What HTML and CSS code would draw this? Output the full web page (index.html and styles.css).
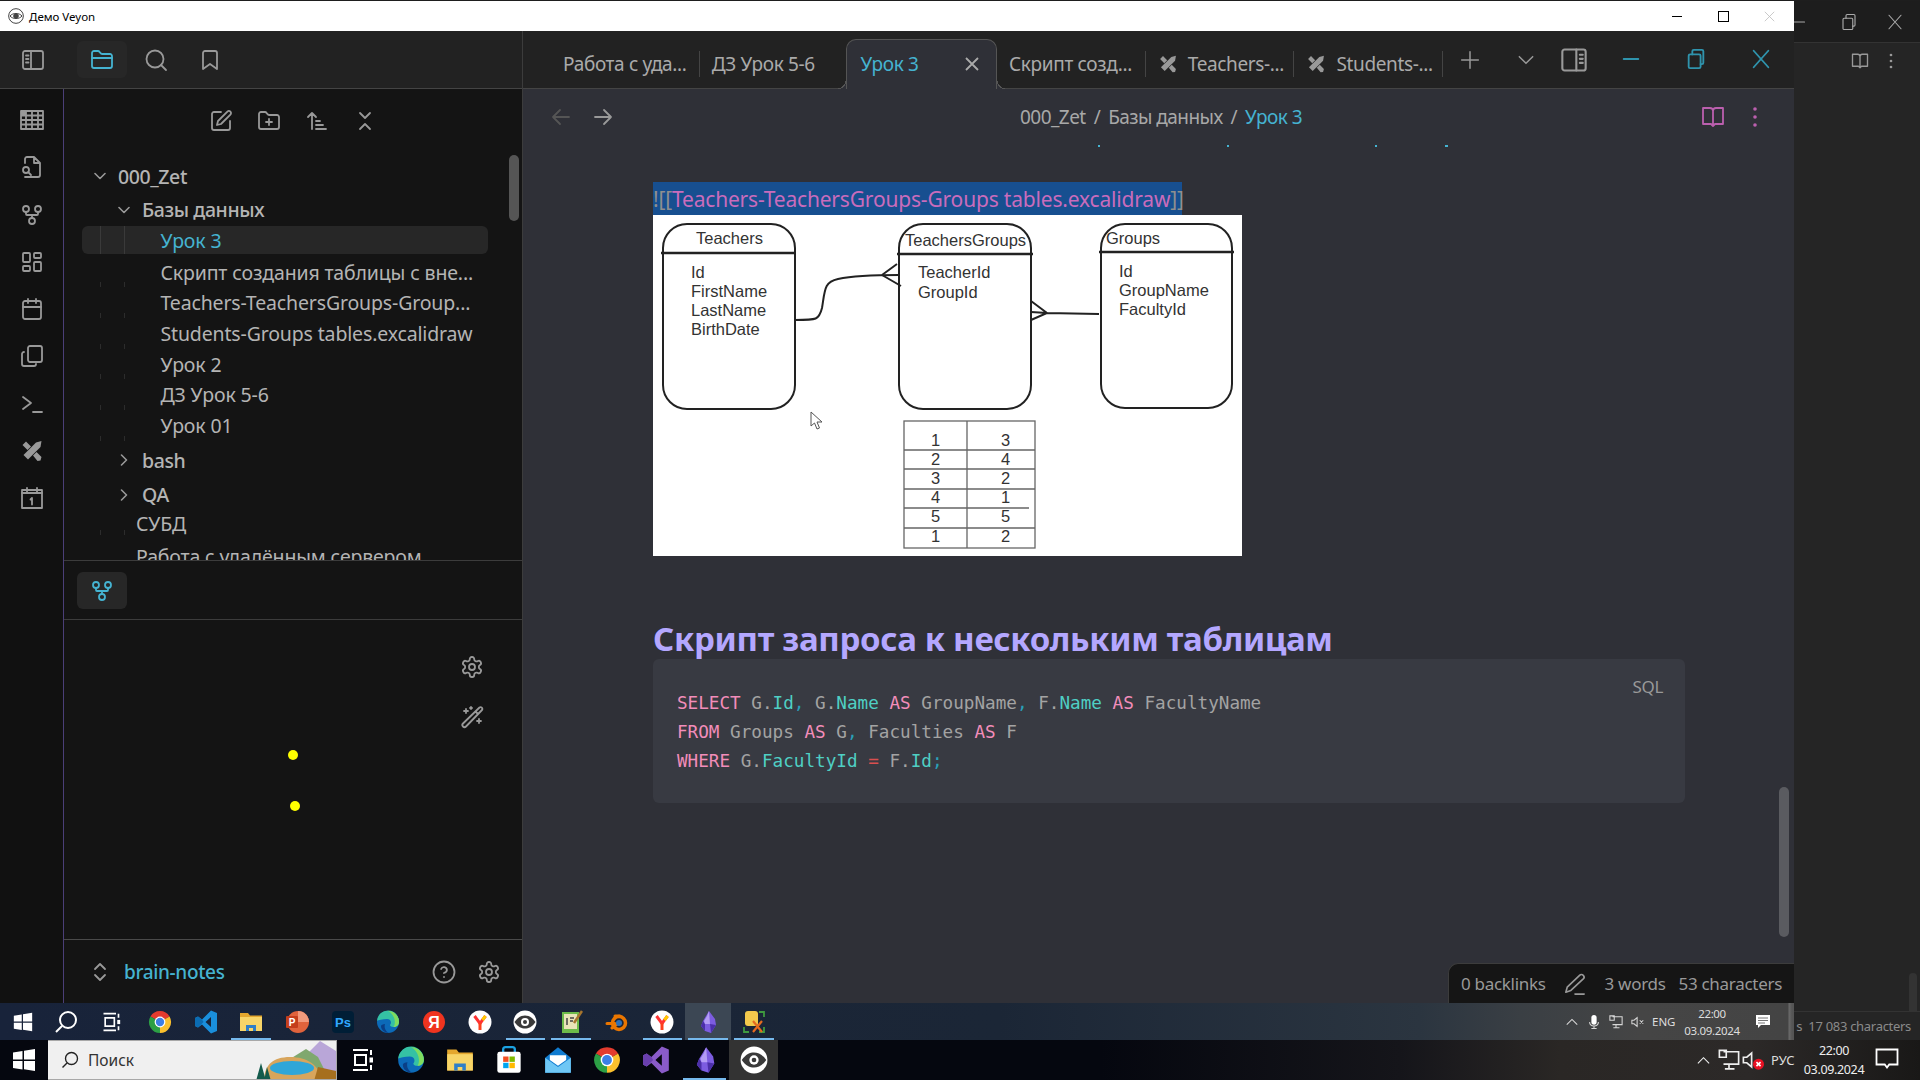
FILE: index.html
```html
<!DOCTYPE html>
<html lang="ru">
<head>
    <meta charset="UTF-8">
    <title>Демо Veyon</title>
    <link rel="stylesheet" href="styles.css">
</head>
<body>

<!-- Icon set -->
<svg class="defs" width="0" height="0">
    <defs>
        <symbol id="i-sidebar" viewBox="0 0 24 24"><rect x="2" y="3" width="20" height="18" rx="2"/><path d="M10 3v18M5 7.500h2.500M5 11h2.500M5 14.500h2.500"/></symbol>
        <symbol id="i-rightbar" viewBox="0 0 24 24"><rect x="2" y="3" width="20" height="18" rx="2"/><path d="M14 3v18M17 7.500h2.500M17 11h2.500M17 14.500h2.500"/></symbol>
        <symbol id="i-folder" viewBox="0 0 24 24"><path d="M4 20h16a2 2 0 0 0 2-2V8a2 2 0 0 0-2-2h-7.930a2 2 0 0 1-1.660-.9l-.82-1.200A2 2 0 0 0 7.930 3H4a2 2 0 0 0-2 2v13c0 1.100.9 2 2 2Z"/><path d="M2 10h20"/></symbol>
        <symbol id="i-search" viewBox="0 0 24 24"><circle cx="11" cy="11" r="8.500"/><path d="m22 22-5-5"/></symbol>
        <symbol id="i-bookmark" viewBox="0 0 24 24"><path d="M19 21l-7-5-7 5V5a2 2 0 0 1 2-2h10a2 2 0 0 1 2 2z"/></symbol>
        <symbol id="i-edit" viewBox="0 0 24 24"><path d="M12 3H5a2 2 0 0 0-2 2v14a2 2 0 0 0 2 2h14a2 2 0 0 0 2-2v-7"/><path d="M18.400 2.600a2.100 2.100 0 1 1 3 3L12 15l-4 1 1-4Z"/></symbol>
        <symbol id="i-folder-plus" viewBox="0 0 24 24"><path d="M4 20h16a2 2 0 0 0 2-2V8a2 2 0 0 0-2-2h-7.930a2 2 0 0 1-1.660-.9l-.82-1.200A2 2 0 0 0 7.930 3H4a2 2 0 0 0-2 2v13c0 1.100.9 2 2 2Z"/><path d="M12 10v6M9 13h6"/></symbol>
        <symbol id="i-sort" viewBox="0 0 24 24"><path d="m3 8 4-4 4 4M7 4v16M11 12h4M11 16h7M11 20h10"/></symbol>
        <symbol id="i-collapse" viewBox="0 0 24 24"><path d="m7 20 5-5 5 5M7 4l5 5 5-5"/></symbol>
        <symbol id="i-graph" viewBox="0 0 24 24"><circle cx="12" cy="18" r="3"/><circle cx="6" cy="6" r="3"/><circle cx="18" cy="6" r="3"/><path d="M18 9v2c0 .6-.4 1-1 1H7c-.6 0-1-.4-1-1V9M12 12v3"/></symbol>
        <symbol id="i-table" viewBox="0 0 24 24"><path d="M1 3h22v18H1zM1 7.500h22M1 12h22M1 16.500h22M6 3v18M12 3v18M18 3v18"/><rect class="solid" x="1" y="3" width="5" height="4.500"/></symbol>
        <symbol id="i-file-search" viewBox="0 0 24 24"><path d="M14 2v6h6M14 2H7a2 2 0 0 0-2 2v4M14 2l6 6v12a2 2 0 0 1-2 2H5"/><circle cx="6" cy="15" r="3"/><path d="m11 20-2.800-2.800"/></symbol>
        <symbol id="i-dash" viewBox="0 0 24 24"><rect x="3" y="3" width="7" height="9" rx="1"/><rect x="14" y="3" width="7" height="5" rx="1"/><rect x="14" y="12" width="7" height="9" rx="1"/><rect x="3" y="16" width="7" height="5" rx="1"/></symbol>
        <symbol id="i-calendar" viewBox="0 0 24 24"><rect x="3" y="4" width="18" height="18" rx="2"/><path d="M16 2v4M8 2v4M3 10h18"/></symbol>
        <symbol id="i-copy" viewBox="0 0 24 24"><rect x="8" y="2" width="14" height="16" rx="2"/><path d="M4 8H4a2 2 0 0 0-2 2v10a2 2 0 0 0 2 2h10a2 2 0 0 0 2-2"/></symbol>
        <symbol id="i-terminal" viewBox="0 0 24 24"><path d="m3 5 8 6-8 6M13 20h9"/></symbol>
        <symbol id="i-tools" viewBox="0 0 24 24"><path class="solid" d="M21.500 2 16 3.500 3.500 16l4.500 4.500L20.500 8Z"/><path class="solid" d="M2.500 6 6 2.500l5 5L7.500 11ZM13 16.500l3.500-3.500 5 5-1 3.500-3 .5Z"/></symbol>
        <symbol id="i-daily" viewBox="0 0 24 24"><rect x="2" y="4" width="20" height="18"/><path d="M7 2v4M17 2v4M2 7h20M12 12v6.500M10.500 13.500 12 12"/></symbol>
        <symbol id="i-gear" viewBox="0 0 24 24"><path d="M12.220 2h-.44a2 2 0 0 0-2 2v.18a2 2 0 0 1-1 1.730l-.43.25a2 2 0 0 1-2 0l-.15-.08a2 2 0 0 0-2.730.73l-.22.38a2 2 0 0 0 .73 2.730l.15.1a2 2 0 0 1 1 1.720v.51a2 2 0 0 1-1 1.740l-.15.09a2 2 0 0 0-.73 2.730l.22.38a2 2 0 0 0 2.730.73l.15-.08a2 2 0 0 1 2 0l.43.25a2 2 0 0 1 1 1.730V20a2 2 0 0 0 2 2h.44a2 2 0 0 0 2-2v-.18a2 2 0 0 1 1-1.730l.43-.25a2 2 0 0 1 2 0l.15.08a2 2 0 0 0 2.730-.73l.22-.39a2 2 0 0 0-.73-2.730l-.15-.08a2 2 0 0 1-1-1.740v-.5a2 2 0 0 1 1-1.740l.15-.09a2 2 0 0 0 .73-2.730l-.22-.38a2 2 0 0 0-2.730-.73l-.15.08a2 2 0 0 1-2 0l-.43-.25a2 2 0 0 1-1-1.730V4a2 2 0 0 0-2-2z"/><circle cx="12" cy="12" r="3"/></symbol>
        <symbol id="i-wand" viewBox="0 0 24 24"><path d="M19.500 2.500a1.800 1.800 0 0 1 2.500 2.500L6 21.500a1.800 1.800 0 0 1-3-3ZM15.500 6.500l2.500 2.500M6 4v4M4 6h4M19 14v4M17 16h4M11 2v2M10 3h2"/></symbol>
        <symbol id="i-help" viewBox="0 0 24 24"><circle cx="12" cy="12" r="10.500"/><path d="M9.100 9a3 3 0 0 1 5.800 1c0 2-3 3-3 3M12 17h.01"/></symbol>
        <symbol id="i-updown" viewBox="0 0 24 24"><path d="m7 15 5 5 5-5M7 9l5-5 5 5"/></symbol>
        <symbol id="i-book" viewBox="0 0 24 24"><path d="M2 3h7a3 3 0 0 1 3 3v15M22 3h-7a3 3 0 0 0-3 3M2 3v16h8l2 2 2-2h8V3"/></symbol>
        <symbol id="i-dots" viewBox="0 0 24 24"><circle class="solid" cx="12" cy="4" r="1.800"/><circle class="solid" cx="12" cy="12" r="1.800"/><circle class="solid" cx="12" cy="20" r="1.800"/></symbol>
        <symbol id="i-pencil" viewBox="0 0 24 24"><path d="M17 2.500a2.800 2.800 0 1 1 4 4L7.500 19 2 21l1.500-5.500ZM12 23h10"/></symbol>
        <symbol id="i-restore" viewBox="0 0 24 24"><rect x="4" y="7" width="13" height="15" rx="1.500"/><path d="M8 7V3.500A1.500 1.500 0 0 1 9.500 2h9A1.500 1.500 0 0 1 20 3.500V16a1.500 1.500 0 0 1-1.500 1.500H17"/></symbol>

        <!-- Taskbar apps -->
        <symbol id="a-win" viewBox="0 0 24 24"><path class="white" d="M1 4.500 10.500 3v8.500H1ZM12 2.800 23 1v10.500H12ZM1 13h9.500v8.500L1 20ZM12 13h11v10l-11-1.800Z"/></symbol>
        <symbol id="a-search" viewBox="0 0 24 24"><circle class="w-line" cx="14" cy="10" r="8"/><path class="w-line" d="M8 16 2 22"/></symbol>
        <symbol id="a-view" viewBox="0 0 24 24"><path class="w-line" d="M3 2h15M3 22h15M5 7h11v10H5ZM21 2v5M21 17v5"/><rect class="white" x="19.500" y="9.500" width="3.500" height="5"/></symbol>
        <symbol id="a-chrome" viewBox="0 0 24 24"><path fill="#e33b2e" d="M12 12 2.470 6.500A11 11 0 0 1 21.530 6.500Z"/><path fill="#fbc02d" d="M12 12 21.530 6.500A11 11 0 0 1 12 23Z"/><path fill="#2c9f45" d="M12 12 12 23A11 11 0 0 1 2.470 6.500Z"/><circle class="white" cx="12" cy="12" r="5.400"/><circle fill="#3d7fe6" cx="12" cy="12" r="4.200"/></symbol>
        <symbol id="a-vscode" viewBox="0 0 24 24"><path fill="#1a8fdc" d="M17 .5 23 3v18l-6 2.500L8 14.500l-4 3-3-1.500V8l3-1.500 4 3Zm0 6.500-5.500 5 5.500 5Z"/><path fill="#0b6cb3" d="M1 8l3-1.500 4 3 1.500 2.500L4 17.500 1 16Z"/></symbol>
        <symbol id="a-explorer" viewBox="0 0 24 24"><path fill="#e4a72e" d="M1 3h8l2 2.500h12V21H1Z"/><path fill="#f8d568" d="M1 7h22v14H1Z"/><path fill="#2f7fc8" d="M7 21v-6h10v6h-3v-3h-4v3Z"/></symbol>
        <symbol id="a-ppt" viewBox="0 0 24 24"><circle fill="#e0633c" cx="13" cy="12" r="11"/><path fill="#f19a7c" d="M13 1a11 11 0 0 1 11 11H13Z"/><rect fill="#c43e1c" x="1" y="6" width="12" height="12" rx="1"/><text class="app-letter" x="7" y="15.500" font-size="10" fill="#fff">P</text></symbol>
        <symbol id="a-ps" viewBox="0 0 24 24"><rect fill="#001e36" x="1" y="1" width="22" height="22" rx="4"/><text class="app-letter" x="12" y="17" font-size="13" fill="#31a8ff">Ps</text></symbol>
        <symbol id="a-edge" viewBox="0 0 24 24"><circle fill="#0c6ab8" cx="12" cy="12" r="11"/><path fill="#35c1a4" d="M1 11A11 11 0 0 1 23 12c0 3-2.500 5-5.500 5-2 0-3.500-.8-3.500-2 2-2 1-6-3-6-4.500 0-8.500 1-10.500 2Z"/><path fill="#7fdc5e" d="M12 1a11 11 0 0 1 11 11c0 3-2.500 5-5.500 5 3-4 1-13-5.500-16Z"/><path fill="#0a3f86" d="M5 16c0 4 4 7 8 7-4-2-5-6-4-9-2 0-4 1-4 2Z"/></symbol>
        <symbol id="a-ya" viewBox="0 0 24 24"><circle fill="#f0341f" cx="12" cy="12" r="11"/><text class="app-letter" x="12" y="18" font-size="16" fill="#fff">Я</text></symbol>
        <symbol id="a-yb" viewBox="0 0 24 24"><circle class="white" cx="12" cy="12" r="11.500"/><path fill="none" stroke="#f33" stroke-width="3" d="M6.500 6 12 13.500 17.500 6"/><path fill="none" stroke="#fc3f1d" stroke-width="3" d="M12 13v7"/><path fill="none" stroke="#fc0" stroke-width="3" d="M14.500 10 17.500 6"/></symbol>
        <symbol id="a-veyon" viewBox="0 0 24 24"><circle class="white" cx="12" cy="12" r="11.500"/><path fill="#3a3a3a" d="M1.500 12C5 7 8.500 5.500 12 5.500S19 7 22.500 12C19 17 15.500 18.500 12 18.500S5 17 1.500 12Z"/><circle class="white" cx="12" cy="12" r="4"/><circle fill="#3a3a3a" cx="12" cy="12" r="2"/></symbol>
        <symbol id="a-notepad" viewBox="0 0 24 24"><rect fill="#6dbb4a" x="3" y="2" width="17" height="21"/><rect fill="#e8e4b8" x="5" y="4" width="13" height="15"/><path stroke="#444" stroke-width="1.500" d="M8 8v7M11 8h4M11 11h3"/><path stroke="#a7752d" stroke-width="2.500" d="M15 13 23 1"/></symbol>
        <symbol id="a-blender" viewBox="0 0 24 24"><circle fill="none" stroke="#ea7600" stroke-width="3.500" cx="14" cy="13" r="6.500"/><path stroke="#ea7600" stroke-width="3" stroke-linecap="round" d="M2 13.500h8M7 18l5-4M10 6h5"/><circle fill="#2d6fb5" cx="14" cy="13" r="3"/></symbol>
        <symbol id="a-obsidian" viewBox="0 0 24 24"><path fill="#7c5ce0" d="M13 1 19 9l1 6-5 8-6-2-4-5 2-5 3-5Z"/><path fill="#4b2fa8" d="M9 21l-4-5 2-5 2 3ZM15 23l-1-9 6 1Z"/><path fill="#b39cf5" d="M13 1 14 14l-5 0-1-3 3-5Z"/></symbol>
        <symbol id="a-app" viewBox="0 0 24 24"><path fill="none" stroke="#3f9a3f" stroke-width="1.800" d="M17 2h5v5M2 17v5h5M22 17v5h-5"/><rect fill="#f2c94c" x="3" y="1" width="13" height="15" rx="3"/><path fill="none" stroke="#e56b1f" stroke-width="2.200" d="M11 11l9 11M20 11l-9 11"/></symbol>
        <symbol id="a-store" viewBox="0 0 24 24"><path fill="none" stroke="#1ba1e2" stroke-width="2" d="M7 7V3a2 2 0 0 1 2-2h6a2 2 0 0 1 2 2v4"/><rect class="white" x="2" y="5" width="20" height="18" rx="2"/><rect fill="#f25022" x="7" y="9" width="4.600" height="4.600"/><rect fill="#7fba00" x="12.400" y="9" width="4.600" height="4.600"/><rect fill="#00a4ef" x="7" y="14.400" width="4.600" height="4.600"/><rect fill="#ffb900" x="12.400" y="14.400" width="4.600" height="4.600"/></symbol>
        <symbol id="a-mail" viewBox="0 0 24 24"><path fill="#0f7bd0" d="M12 1 23 10v13H1V10Z"/><path fill="#6fc7f5" d="M1 10v13h22V10L12 18Z"/><path fill="#fff" d="M5 8h14v4l-7 5-7-5Z"/></symbol>
        <symbol id="a-vs" viewBox="0 0 24 24"><path fill="#8a5bc9" d="M17 .5 23 3v18l-6 2.500L8 14.500l-4 3-3-1.500V8l3-1.500 4 3Zm0 6.500-5.500 5 5.500 5Z"/><path fill="#6a3fae" d="M1 8l3-1.500 4 3 1.500 2.500L4 17.500 1 16Z"/></symbol>
    </defs>
</svg>

<div class="desktop">
    <div class="windows">

        <!-- Veyon demo window -->
        <div class="veyon">
            <div class="titlebar">
                <svg class="title-eye" viewBox="0 0 24 24"><circle cx="12" cy="12" r="11"/><path d="M3 12c4-5 14-5 18 0-4 5-14 5-18 0Z"/><circle class="eye-dot" cx="12" cy="12" r="3.500"/></svg>
                <span class="title-text">Демо Veyon</span>
                <div class="title-buttons">
                    <span class="tb-min"></span>
                    <span class="tb-max"></span>
                    <svg class="tb-close" viewBox="0 0 14 14"><path d="M1 1l12 12M13 1 1 13"/></svg>
                </div>
            </div>

            <div class="app">
                <!-- Left part -->
                <div class="left">
                    <div class="left-head">
                        <span class="head-btn first"><svg class="ic"><use href="#i-sidebar"/></svg></span>
                        <span class="head-btn active"><svg class="ic"><use href="#i-folder"/></svg></span>
                        <span class="head-btn"><svg class="ic"><use href="#i-search"/></svg></span>
                        <span class="head-btn"><svg class="ic"><use href="#i-bookmark"/></svg></span>
                    </div>
                    <div class="left-body">
                        <div class="ribbon">
                            <svg class="ic"><use href="#i-table"/></svg>
                            <svg class="ic"><use href="#i-file-search"/></svg>
                            <svg class="ic"><use href="#i-graph"/></svg>
                            <svg class="ic"><use href="#i-dash"/></svg>
                            <svg class="ic"><use href="#i-calendar"/></svg>
                            <svg class="ic"><use href="#i-copy"/></svg>
                            <svg class="ic"><use href="#i-terminal"/></svg>
                            <svg class="ic"><use href="#i-tools"/></svg>
                            <svg class="ic"><use href="#i-daily"/></svg>
                        </div>
                        <div class="sidebar">
                            <div class="files-pane">
                                <div class="nav-buttons">
                                    <svg class="ic"><use href="#i-edit"/></svg>
                                    <svg class="ic"><use href="#i-folder-plus"/></svg>
                                    <svg class="ic"><use href="#i-sort"/></svg>
                                    <svg class="ic"><use href="#i-collapse"/></svg>
                                </div>
                                <div class="tree">
                                    <div class="tree-folder lvl0"><svg class="chev" viewBox="0 0 12 12"><path d="M1 3.500 6 8.500l5-5"/></svg>000_Zet</div>
                                    <div class="tree-folder lvl1 open"><svg class="chev" viewBox="0 0 12 12"><path d="M1 3.500 6 8.500l5-5"/></svg>Базы данных</div>
                                    <div class="tree-file current">Урок 3</div>
                                    <div class="tree-file">Скрипт создания таблицы с вне...</div>
                                    <div class="tree-file">Teachers-TeachersGroups-Group...</div>
                                    <div class="tree-file">Students-Groups tables.excalidraw</div>
                                    <div class="tree-file">Урок 2</div>
                                    <div class="tree-file">ДЗ Урок 5-6</div>
                                    <div class="tree-file">Урок 01</div>
                                    <div class="tree-folder lvl1 after-files"><svg class="chev" viewBox="0 0 12 12"><path d="M3.500 1 8.500 6l-5 5"/></svg>bash</div>
                                    <div class="tree-folder lvl1"><svg class="chev" viewBox="0 0 12 12"><path d="M3.500 1 8.500 6l-5 5"/></svg>QA</div>
                                    <div class="tree-file top subd">СУБД</div>
                                    <div class="tree-file top">Работа с удалённым сервером</div>
                                </div>
                                <div class="tree-scroll"></div>
                            </div>
                            <div class="graph-head">
                                <span class="head-btn active"><svg class="ic"><use href="#i-graph"/></svg></span>
                            </div>
                            <div class="graph-pane">
                                <svg class="ic graph-gear"><use href="#i-gear"/></svg>
                                <svg class="ic graph-wand"><use href="#i-wand"/></svg>
                                <span class="graph-node n1"></span>
                                <span class="graph-node n2"></span>
                            </div>
                            <div class="vault-bar">
                                <svg class="ic updown"><use href="#i-updown"/></svg>
                                <span class="vault-name">brain-notes</span>
                                <svg class="ic help"><use href="#i-help"/></svg>
                                <svg class="ic"><use href="#i-gear"/></svg>
                            </div>
                        </div>
                    </div>
                </div>

                <!-- Main part -->
                <div class="main">
                    <div class="tabbar">
                        <div class="tab sep">Работа с уда...</div>
                        <div class="tab">ДЗ Урок 5-6</div>
                        <div class="tab active">Урок 3<svg class="tab-close" viewBox="0 0 14 14"><path d="M1 1l12 12M13 1 1 13"/></svg></div>
                        <div class="tab sep">Скрипт созд...</div>
                        <div class="tab sep"><svg class="ic tab-ic"><use href="#i-tools"/></svg>Teachers-...</div>
                        <div class="tab sep"><svg class="ic tab-ic"><use href="#i-tools"/></svg>Students-...</div>
                        <svg class="ic tab-plus" viewBox="0 0 24 24"><path d="M12 2v20M2 12h20"/></svg>
                        <svg class="ic tab-list" viewBox="0 0 24 24"><path d="m4 8 8 8 8-8"/></svg>
                        <svg class="ic tab-panel"><use href="#i-rightbar"/></svg>
                        <div class="win-buttons">
                            <svg class="ic" viewBox="0 0 24 24"><path d="M4 12h16"/></svg>
                            <svg class="ic"><use href="#i-restore"/></svg>
                            <svg class="ic" viewBox="0 0 24 24"><path d="M4 3l16 18M20 3 4 21"/></svg>
                        </div>
                    </div>

                    <div class="view">
                        <div class="view-head">
                            <svg class="ic back" viewBox="0 0 24 24"><path d="M20 12H4m7-7-7 7 7 7"/></svg>
                            <svg class="ic forward" viewBox="0 0 24 24"><path d="M4 12h16m-7-7 7 7-7 7"/></svg>
                            <div class="crumbs"><span>000_Zet</span><i>/</i><span>Базы данных</span><i>/</i><span class="crumb-now">Урок 3</span></div>
                            <svg class="ic mode"><use href="#i-book"/></svg>
                            <svg class="ic more"><use href="#i-dots"/></svg>
                        </div>
                        <svg class="cut-line" viewBox="0 0 1271 3"><rect x="575" width="2" height="2"/><rect x="704" width="2" height="2"/><rect x="852" width="2" height="2"/><rect x="922" width="3" height="2"/></svg>

                        <div class="note">
                            <div class="embed-link"><span class="brk">![[</span>Teachers-TeachersGroups-Groups tables.excalidraw<span class="brk">]]</span></div>
                            <div class="drawing">
                                <svg class="er" viewBox="0 0 589 341">
                                    <g class="er-line">
                                        <rect x="10" y="9" width="132" height="185" rx="24"/>
                                        <path class="er-head" d="M8 38h135"/>
                                        <rect x="246" y="9" width="132" height="185" rx="24"/>
                                        <path class="er-head" d="M244 39h136"/>
                                        <rect x="448" y="9" width="131" height="184" rx="24"/>
                                        <path class="er-head" d="M446 37h135"/>
                                        <path d="M142 105c22 0 24 0 27-12 3-18 2-26 16-29 14-3 40-4 61-4"/>
                                        <path d="M229 60 244 49M229 60 248 71M378 86 394 98 378 105M378 97 394 98 446 99"/>
                                    </g>
                                    <g class="er-grid">
                                        <rect x="251" y="206" width="131" height="127"/>
                                        <path d="M314 206v127M251 235h131M251 254h131M251 274h131M251 293h125M251 313h131"/>
                                    </g>
                                    <g class="er-text">
                                        <text x="43" y="29">Teachers</text>
                                        <text x="38" y="63">Id</text>
                                        <text x="38" y="82">FirstName</text>
                                        <text x="38" y="101">LastName</text>
                                        <text x="38" y="120">BirthDate</text>
                                        <text x="252" y="31">TeachersGroups</text>
                                        <text x="265" y="63">TeacherId</text>
                                        <text x="265" y="83">GroupId</text>
                                        <text x="453" y="29">Groups</text>
                                        <text x="466" y="62">Id</text>
                                        <text x="466" y="81">GroupName</text>
                                        <text x="466" y="100">FacultyId</text>
                                        <text x="278" y="231">1</text><text x="348" y="231">3</text>
                                        <text x="278" y="250">2</text><text x="348" y="250">4</text>
                                        <text x="278" y="269">3</text><text x="348" y="269">2</text>
                                        <text x="278" y="288">4</text><text x="348" y="288">1</text>
                                        <text x="278" y="307">5</text><text x="348" y="307">5</text>
                                        <text x="278" y="327">1</text><text x="348" y="327">2</text>
                                    </g>
                                    <path class="er-cursor" d="M158 197v14l3.500-3 2.500 6 2.500-1-2.500-6h5Z"/>
                                </svg>
                            </div>

                            <h2 class="note-title">Скрипт запроса к нескольким таблицам</h2>
                            <div class="code-block">
                                <span class="code-lang">SQL</span>
                                <pre class="code"><b>SELECT</b> G.<em>Id</em><u>,</u> G.<em>Name</em> <b>AS</b> GroupName<u>,</u> F.<em>Name</em> <b>AS</b> FacultyName
<b>FROM</b> Groups <b>AS</b> G<u>,</u> Faculties <b>AS</b> F
<b>WHERE</b> G.<em>FacultyId</em> <s>=</s> F.<em>Id</em><u>;</u></pre>
                            </div>
                        </div>

                        <div class="view-scroll"></div>
                        <div class="status-bar">
                            <span>0 backlinks</span>
                            <svg class="ic pen"><use href="#i-pencil"/></svg>
                            <span class="words">3 words</span>
                            <span>53 characters</span>
                        </div>
                    </div>
                </div>
            </div>

            <!-- Remote taskbar -->
            <div class="taskbar inner">
                <span class="cell"><svg class="app-ic small"><use href="#a-win"/></svg></span>
                <span class="cell"><svg class="app-ic pull"><use href="#a-search"/></svg></span>
                <span class="cell"><svg class="app-ic small pull"><use href="#a-view"/></svg></span>
                <span class="cell"><svg class="app-ic"><use href="#a-chrome"/></svg></span>
                <span class="cell"><svg class="app-ic"><use href="#a-vscode"/></svg></span>
                <span class="cell open"><svg class="app-ic"><use href="#a-explorer"/></svg></span>
                <span class="cell"><svg class="app-ic"><use href="#a-ppt"/></svg></span>
                <span class="cell"><svg class="app-ic"><use href="#a-ps"/></svg></span>
                <span class="cell"><svg class="app-ic"><use href="#a-edge"/></svg></span>
                <span class="cell"><svg class="app-ic"><use href="#a-ya"/></svg></span>
                <span class="cell"><svg class="app-ic"><use href="#a-yb"/></svg></span>
                <span class="cell open"><svg class="app-ic"><use href="#a-veyon"/></svg></span>
                <span class="cell open"><svg class="app-ic"><use href="#a-notepad"/></svg></span>
                <span class="cell"><svg class="app-ic"><use href="#a-blender"/></svg></span>
                <span class="cell open"><svg class="app-ic"><use href="#a-yb"/></svg></span>
                <span class="cell open current"><svg class="app-ic"><use href="#a-obsidian"/></svg></span>
                <span class="cell open"><svg class="app-ic"><use href="#a-app"/></svg></span>
                <div class="tray">
                    <svg class="tray-ic" viewBox="0 0 16 16"><path d="m2 11 6-6 6 6"/></svg>
                    <svg class="tray-ic" viewBox="0 0 16 16"><rect class="white" x="5" y="0" width="6" height="11" rx="3"/><path d="M3 8c0 6 10 6 10 0M8 13v3M5 15.500h6"/></svg>
                    <svg class="tray-ic" viewBox="0 0 16 16"><path d="M4 2h11v9H4M8 11v3M5 14.500h7M1 1h5v5H1z"/></svg>
                    <svg class="tray-ic" viewBox="0 0 16 16"><path d="M1 6v4h2.500L7 13V3L3.500 6ZM10 6l4 4M14 6l-4 4"/></svg>
                    <span class="tray-lang">ENG</span>
                    <div class="tray-clock"><span>22:00</span><span>03.09.2024</span></div>
                    <svg class="tray-note" viewBox="0 0 16 16"><path class="white" d="M1 1h14v10H6l-3 3v-3H1Z"/><path class="note-lines" d="M3 4h10M3 6.500h10M3 9h7"/></svg>
                </div>
            </div>
        </div>

        <!-- Window behind -->
        <div class="back-window">
            <div class="back-title">
                <svg class="ic" viewBox="0 0 24 24"><path d="M0 12h14"/></svg>
                <svg class="ic"><use href="#i-restore"/></svg>
                <svg class="ic" viewBox="0 0 24 24"><path d="M4 3l16 18M20 3 4 21"/></svg>
            </div>
            <div class="back-head">
                <svg class="ic"><use href="#i-book"/></svg>
                <svg class="ic"><use href="#i-dots"/></svg>
            </div>
            <div class="back-fill"><div class="back-scroll"></div></div>
            <div class="back-status">s&nbsp;&nbsp;17 083 characters</div>
        </div>
    </div>

    <!-- Local taskbar -->
    <div class="taskbar outer">
        <span class="start"><svg class="app-ic"><use href="#a-win"/></svg></span>
        <div class="search-box">
            <svg class="search-ic" viewBox="0 0 24 24"><circle cx="14" cy="10" r="8"/><path d="M8 16 2 22"/></svg>
            <span>Поиск</span>
            <svg class="search-art" viewBox="0 0 80 40">
                <path fill="#b9a6d8" d="M44 20 58 6l6-6 16 10v30H44Z"/>
                <path fill="#7fa86e" d="M34 18 50 8l12 8 8 16H40Z"/>
                <path fill="#d8a55c" d="M8 40c0-15 8-24 26-24s30 9 32 24Z"/>
                <ellipse fill="#2fa6d8" cx="36" cy="27" rx="22" ry="7"/>
                <path fill="#a66f1e" d="M58 40l4-14 18 4v10Z"/>
                <path fill="#145b4c" d="M0 40 5 22l5 18ZM8 40l3-14 4 14Z"/>
            </svg>
        </div>
        <span class="cell wide"><svg class="app-ic"><use href="#a-view"/></svg></span>
        <span class="cell wide"><svg class="app-ic big"><use href="#a-edge"/></svg></span>
        <span class="cell wide"><svg class="app-ic big"><use href="#a-explorer"/></svg></span>
        <span class="cell wide"><svg class="app-ic big"><use href="#a-store"/></svg></span>
        <span class="cell wide"><svg class="app-ic big"><use href="#a-mail"/></svg></span>
        <span class="cell wide"><svg class="app-ic big"><use href="#a-chrome"/></svg></span>
        <span class="cell wide"><svg class="app-ic big"><use href="#a-vs"/></svg></span>
        <span class="cell wide open"><svg class="app-ic big"><use href="#a-obsidian"/></svg></span>
        <span class="cell wide current"><svg class="app-ic big"><use href="#a-veyon"/></svg></span>
        <div class="tray">
            <svg class="tray-ic" viewBox="0 0 16 16"><path d="m2 11 6-6 6 6"/></svg>
            <svg class="tray-ic large" viewBox="0 0 16 16"><path d="M4 2h11v9H4M8 11v3M5 14.500h7M1 1h5v5H1z"/></svg>
            <svg class="tray-ic large" viewBox="0 0 16 16"><path d="M1 6v4h2.500L7 13V3L3.500 6Z"/><circle class="mute" cx="12" cy="11" r="4"/><path class="mute-x" d="m10.500 9.500 3 3M13.500 9.500l-3 3"/></svg>
            <span class="tray-lang">РУС</span>
            <div class="tray-clock"><span>22:00</span><span>03.09.2024</span></div>
            <svg class="tray-note" viewBox="0 0 16 16"><path d="M1 1h14v10H9.500L8 13l-1.500-2H1Z"/></svg>
        </div>
    </div>
</div>

</body>
</html>
```

FILE: styles.css
```css
html, body {
    margin: 0;
    padding: 0;
    width: 1920px;
    height: 1080px;
    overflow: hidden;
    background-color: #111;
    font-family: "Noto Sans", "Open Sans", sans-serif;
}
.defs {
    position: absolute;
}
.ic {
    width: 24px;
    height: 24px;
    flex: none;
    fill: none;
    stroke: currentColor;
    stroke-width: 1.8;
    stroke-linecap: round;
    stroke-linejoin: round;
    color: #999;
}
.solid {
    fill: currentColor;
    stroke: none;
}
.white {
    fill: #fff;
    stroke: none;
}
.w-line {
    fill: none;
    stroke: #fff;
    stroke-width: 2;
}
.app-letter {
    font-family: "Liberation Sans", sans-serif;
    font-weight: 700;
    text-anchor: middle;
}

.desktop {
    display: flex;
    flex-direction: column;
    width: 1920px;
    height: 1080px;
}
.windows {
    display: flex;
    height: 1040px;
}

/* Veyon window */
.veyon {
    display: flex;
    flex-direction: column;
    width: 1794px;
    flex: none;
}
.titlebar {
    display: flex;
    align-items: center;
    height: 30px;
    padding-left: 8px;
    background-color: #fff;
    border-top: 1px solid #1e1e1e;
    color: #000;
    font-size: 11.5px;
}
.title-eye {
    width: 16px;
    height: 16px;
    margin-right: 5px;
    fill: none;
    stroke: #444;
    stroke-width: 1.5;
}
.eye-dot {
    fill: #444;
}
.title-buttons {
    display: flex;
    align-items: center;
    margin-left: auto;
}
.tb-min {
    width: 10px;
    height: 1px;
    margin-right: 36px;
    background-color: #000;
}
.tb-max {
    width: 9px;
    height: 9px;
    margin-right: 35px;
    border: 1px solid #000;
}
.tb-close {
    width: 11px;
    height: 11px;
    margin-right: 19px;
    stroke: #bbb;
    stroke-width: 1;
}

.app {
    display: flex;
    height: 972px;
}
.left {
    display: flex;
    flex-direction: column;
    width: 523px;
    flex: none;
    border-right: 1px solid #3c3c3c;
    box-sizing: border-box;
}
.left-head {
    display: flex;
    align-items: center;
    gap: 4px;
    height: 58px;
    box-sizing: border-box;
    padding-left: 8px;
    background-color: #222;
    border-bottom: 1px solid #444;
}
.head-btn {
    display: flex;
    align-items: center;
    justify-content: center;
    width: 50px;
    height: 37px;
    border-radius: 6px;
}
.head-btn.first {
    margin-right: 15px;
}
.head-btn.active {
    background-color: #272727;
}
.head-btn.active .ic {
    color: #45b3d1;
}
.left-body {
    display: flex;
    flex: 1;
    min-height: 0;
}
.ribbon {
    display: flex;
    flex-direction: column;
    align-items: center;
    gap: 23.3px;
    width: 64px;
    padding-top: 19px;
    box-sizing: border-box;
    background-color: #111;
    border-right: 1px solid #4b3f78;
    flex: none;
}
.sidebar {
    display: flex;
    flex-direction: column;
    flex: 1;
    min-width: 0;
    background-color: #141414;
}
.files-pane {
    position: relative;
    display: flex;
    flex-direction: column;
    height: 472px;
    box-sizing: border-box;
    border-bottom: 1px solid #3c3c3c;
    overflow: hidden;
}
.nav-buttons {
    display: flex;
    justify-content: center;
    gap: 24px;
    padding: 20px 0 26px;
}
.tree {
    padding: 0 34px 0 18px;
    color: #b4b4b4;
    font-size: 19.5px;
    white-space: nowrap;
    letter-spacing: -0.15px;
}
.tree-folder {
    position: relative;
    display: flex;
    align-items: center;
    height: 34.5px;
    font-weight: 500;
    letter-spacing: -0.4px;
}
.tree-folder.open {
    height: 32.5px;
}
.tree-folder.after-files {
    margin-top: 2px;
}
.tree-folder.lvl0 {
    padding-left: 36px;
}
.tree-folder.lvl1 {
    padding-left: 60px;
}
.chev {
    position: absolute;
    width: 12px;
    height: 12px;
    margin-left: -24px;
    fill: none;
    stroke: #999;
    stroke-width: 1.6;
    stroke-linecap: round;
    stroke-linejoin: round;
}
.tree-file {
    display: flex;
    align-items: center;
    height: 30.7px;
    padding-left: 78.5px;
    border-radius: 6px;
    background-image: linear-gradient(#2c2c2c, #2c2c2c), linear-gradient(#2c2c2c, #2c2c2c);
    background-size: 1px 5px, 1px 5px;
    background-position: 18px 100%, 42px 100%;
    background-repeat: no-repeat;
}
.tree-file.top {
    padding-left: 54px;
}
.tree-file.subd {
    height: 23px;
    margin-bottom: 6px;
}
.tree-file.current {
    height: 28px;
    margin-bottom: 2.7px;
    background-color: #272727;
    color: #45b3d1;
    background-image: linear-gradient(#3a3a3a, #3a3a3a), linear-gradient(#3a3a3a, #3a3a3a);
    background-size: 1px 100%, 1px 100%;
    background-position: 18px 0, 42px 0;
}
.tree-scroll {
    position: absolute;
    top: 66px;
    right: 3px;
    width: 10px;
    height: 66px;
    border-radius: 5px;
    background-color: #555;
}
.graph-head {
    height: 59px;
    box-sizing: border-box;
    padding: 11px 0 0 13px;
    border-bottom: 1px solid #3c3c3c;
}
.graph-pane {
    position: relative;
    height: 320px;
    box-sizing: border-box;
    border-bottom: 1px solid #4a4a4a;
}
.graph-gear {
    position: absolute;
    top: 35px;
    left: 396px;
}
.graph-wand {
    position: absolute;
    top: 85px;
    left: 396px;
}
.graph-node {
    position: absolute;
    width: 10px;
    height: 10px;
    border-radius: 50%;
    background-color: #ff0;
}
.n1 {
    top: 130px;
    left: 224px;
}
.n2 {
    top: 181px;
    left: 226px;
}
.vault-bar {
    display: flex;
    align-items: center;
    flex: 1;
    padding: 0 21px 0 24px;
}
.updown {
    margin-right: 12px;
}
.vault-name {
    color: #45b3d1;
    font-size: 19px;
    font-weight: 500;
    letter-spacing: -0.35px;
}
.help {
    margin-left: auto;
    margin-right: 21px;
}

/* Tabs */
.main {
    display: flex;
    flex-direction: column;
    width: 1271px;
}
.tabbar {
    display: flex;
    align-items: flex-end;
    height: 58px;
    box-sizing: border-box;
    padding-left: 28px;
    background-color: #222;
    border-bottom: 1px solid #444;
    color: #aaa;
    font-size: 19px;
    letter-spacing: -0.35px;
}
.tab {
    position: relative;
    display: flex;
    align-items: center;
    width: 148.7px;
    height: 49px;
    box-sizing: border-box;
    padding: 0 0 2px 12px;
    white-space: nowrap;
    margin-bottom: -1px;
}
.tab.sep::after {
    content: "";
    position: absolute;
    right: 0;
    top: 11px;
    height: 26px;
    width: 1px;
    background-color: #444;
}
.tab.active {
    z-index: 1;
    width: 150.7px;
    height: 50px;
    margin-left: -2px;
    padding-left: 13px;
    background-color: #2f3037;
    border: 1px solid #555;
    border-bottom: none;
    border-radius: 10px 10px 0 0;
    color: #45b3d1;
}
.tab.active::before,
.tab.active::after {
    content: "";
    position: absolute;
    bottom: 0;
    width: 8px;
    height: 8px;
}
.tab.active::before {
    left: -9px;
    background: radial-gradient(circle at 0 0, transparent 7px, #555 7px, #555 8px, #2f3037 8px);
}
.tab.active::after {
    right: -9px;
    background: radial-gradient(circle at 100% 0, transparent 7px, #555 7px, #555 8px, #2f3037 8px);
}
.tab-close {
    width: 14px;
    height: 14px;
    margin-left: auto;
    margin-right: 17px;
    fill: none;
    stroke: #aaa;
    stroke-width: 1.8;
}
.tab-ic {
    width: 20px;
    height: 20px;
    margin: 0 10px 0 0;
}
.tab-plus {
    width: 20px;
    height: 20px;
    margin: 0 0 18px 17px;
}
.tab-list {
    width: 20px;
    height: 20px;
    margin: 0 0 18px 36px;
}
.tab-panel {
    width: 28px;
    height: 28px;
    margin: 0 0 14px 24px;
}
.win-buttons {
    display: flex;
    gap: 43px;
    margin: 0 0 18px 32px;
}
.win-buttons .ic {
    width: 22px;
    height: 22px;
    color: #2f94ad;
    stroke-width: 2;
}

/* Note */
.view {
    position: relative;
    flex: 1;
    background-color: #2f3037;
}
.view-head {
    display: flex;
    align-items: center;
    height: 56px;
    padding: 0 27px 0 26px;
    box-sizing: border-box;
}
.back {
    color: #555;
    margin-right: 18px;
}
.crumbs {
    display: flex;
    gap: 8px;
    margin-left: 405px;
    color: #a8a8a8;
    font-size: 19px;
    letter-spacing: -0.55px;
}
.crumbs i {
    font-style: normal;
}
.crumb-now {
    color: #45b3d1;
}
.mode {
    margin-left: auto;
    color: #bb5fae;
}
.more {
    margin-left: 18px;
    color: #bb5fae;
}
.cut-line {
    display: block;
    width: 1271px;
    height: 3px;
    fill: #45b3d1;
}
.note {
    padding: 34px 0 0 130px;
}
.embed-link {
    width: 529px;
    height: 33px;
    line-height: 35px;
    background-color: #174f90;
    color: #c96cbc;
    font-size: 21px;
    letter-spacing: -0.18px;
    white-space: nowrap;
}
.brk {
    color: #8f8f8f;
}
.drawing {
    width: 589px;
    height: 341px;
    background-color: #fff;
}
.er {
    display: block;
    width: 589px;
    height: 341px;
}
.er-line {
    fill: none;
    stroke: #222;
    stroke-width: 2;
}
.er-head {
    stroke-width: 2.6;
}
.er-grid {
    fill: none;
    stroke: #666;
    stroke-width: 1.3;
}
.er-text {
    font-family: "Liberation Sans", sans-serif;
    font-size: 16.5px;
    fill: #333;
}
.er-cursor {
    fill: #fff;
    stroke: #555;
    stroke-width: 1;
}
.note-title {
    margin: 64px 0 0;
    height: 39px;
    line-height: 37px;
    color: #b4a7ff;
    font-size: 33px;
    font-weight: 700;
    letter-spacing: -0.32px;
    white-space: nowrap;
}
.code-block {
    position: relative;
    width: 1032px;
    height: 144px;
    box-sizing: border-box;
    padding: 30px 0 0 24px;
    background-color: #383a42;
    border-radius: 6px;
}
.code-lang {
    position: absolute;
    top: 16px;
    right: 22px;
    color: #999;
    font-size: 17px;
    letter-spacing: -0.3px;
}
.code {
    margin: 0;
    font-family: "DejaVu Sans Mono", "Liberation Mono", monospace;
    font-size: 17.65px;
    line-height: 29px;
    color: #a3a3a3;
}
.code b {
    font-weight: 400;
    color: #f28dba;
}
.code em {
    font-style: normal;
    color: #4fcfc4;
}
.code u {
    text-decoration: none;
    color: #2a9fb8;
}
.code s {
    text-decoration: none;
    color: #d94f4f;
}
.view-scroll {
    position: absolute;
    top: 698px;
    right: 5px;
    width: 10px;
    height: 150px;
    border-radius: 5px;
    background-color: #5a5b60;
}
.status-bar {
    position: absolute;
    right: 0;
    bottom: 0;
    display: flex;
    align-items: center;
    height: 40px;
    box-sizing: border-box;
    padding: 0 12px;
    background-color: #151515;
    border: 1px solid #3c3c3c;
    border-width: 1px 0 0 1px;
    border-radius: 10px 0 0 0;
    color: #999;
    font-size: 17px;
    letter-spacing: -0.3px;
}
.pen {
    width: 22px;
    height: 22px;
    margin: 0 19px 0 18px;
}
.words {
    margin-right: 13px;
}

/* Taskbars */
.taskbar {
    display: flex;
    align-items: stretch;
}
.taskbar.inner {
    height: 37px;
    background: linear-gradient(90deg, #18233a 0, #1b2636 1000px, #2b3540 1420px, #3a3f44 1520px, #454545 1640px, #444 1788px, #6a6a6a 1789px, #555 1792px);
}
.taskbar.outer {
    height: 40px;
    background: linear-gradient(90deg, #05070f 0, #05070f 1100px, #15151a 1400px, #2a2725 1560px, #2c2928 1750px, #191817 1920px);
}
.cell {
    position: relative;
    display: flex;
    align-items: center;
    justify-content: center;
    width: 45.7px;
    flex: none;
}
.cell.open::after {
    content: "";
    position: absolute;
    left: 3px;
    right: 3px;
    bottom: 0;
    height: 2px;
    background-color: #76b9ed;
}
.cell.current {
    background-color: #3c4754;
}
.cell.wide {
    width: 49px;
}
.cell.wide.current {
    background-color: #333;
}
.app-ic {
    width: 24px;
    height: 24px;
    flex: none;
}
.app-ic.small {
    width: 20px;
    height: 20px;
}
.app-ic.big {
    width: 28px;
    height: 28px;
}
.app-ic.pull {
    margin-right: 6px;
}
.start {
    display: flex;
    align-items: center;
    justify-content: center;
    width: 48px;
    flex: none;
}
.search-box {
    position: relative;
    display: flex;
    align-items: center;
    width: 289px;
    box-sizing: border-box;
    padding-left: 13px;
    background-color: #f0f0f0;
    border: 1px solid #a8a8a8;
    border-width: 1px 1px 1px 0;
    color: #333;
    font-size: 15.5px;
    overflow: hidden;
}
.search-ic {
    width: 18px;
    height: 18px;
    margin-right: 9px;
    fill: none;
    stroke: #222;
    stroke-width: 1.8;
}
.search-art {
    position: absolute;
    right: 0;
    top: 0;
    width: 80px;
    height: 40px;
}
.tray {
    display: flex;
    align-items: center;
    margin-left: auto;
    color: #ddd;
}
.tray-ic {
    width: 14px;
    height: 14px;
    margin-right: 8px;
    fill: none;
    stroke: #d8d8d8;
    stroke-width: 1.2;
}
.tray-lang {
    margin: 0 4.5px 0 -1px;
    font-size: 11.5px;
}
.tray-clock {
    display: flex;
    flex-direction: column;
    align-items: center;
    width: 64px;
    font-size: 11.5px;
    line-height: 17px;
    letter-spacing: -0.35px;
}
.tray-note {
    width: 16px;
    height: 16px;
    margin: 0 23px 0 11px;
    fill: none;
    stroke: #fff;
    stroke-width: 1.2;
}
.note-lines {
    stroke: #777;
    stroke-width: 1;
}
.taskbar.outer .tray-ic {
    width: 15px;
    height: 15px;
    margin-right: 7px;
    stroke: #eee;
}
.taskbar.outer .tray-ic.large {
    width: 22px;
    height: 22px;
    margin-right: 2px;
}
.mute {
    fill: #e81123;
    stroke: none;
}
.mute-x {
    stroke: #fff;
}
.taskbar.outer .tray-lang {
    margin: 0 7.5px 0 5px;
    font-size: 13px;
}
.taskbar.outer .tray-clock {
    width: 64px;
    font-size: 12.5px;
    line-height: 19px;
    color: #eee;
}
.taskbar.outer .tray-note {
    width: 24px;
    height: 24px;
    margin: 0 21px 0 9px;
}

/* Window behind */
.back-window {
    display: flex;
    flex-direction: column;
    width: 126px;
    flex: none;
    background-color: #252525;
}
.back-title {
    display: flex;
    align-items: center;
    gap: 28px;
    height: 43px;
    box-sizing: border-box;
    background-color: #1d1d1d;
    border-bottom: 1px solid #333;
    border-top: 1px solid #1e1e1e;
}
.back-title .ic {
    width: 18px;
    height: 18px;
    stroke-width: 1.5;
    color: #aaa;
}
.back-head {
    display: flex;
    gap: 13px;
    justify-content: flex-end;
    padding: 9px 20px 0 0;
}
.back-head .ic {
    width: 18px;
    height: 18px;
}
.back-fill {
    position: relative;
    flex: 1;
}
.back-scroll {
    position: absolute;
    right: 3px;
    bottom: 0;
    width: 8px;
    height: 38px;
    background-color: #333;
    border-radius: 4px 4px 0 0;
}
.back-status {
    height: 29px;
    line-height: 29px;
    box-sizing: border-box;
    border-top: 1px solid #333;
    padding-right: 9px;
    text-align: right;
    color: #8a8a8a;
    font-size: 13px;
    letter-spacing: -0.3px;
    white-space: nowrap;
    overflow: hidden;
}
```
